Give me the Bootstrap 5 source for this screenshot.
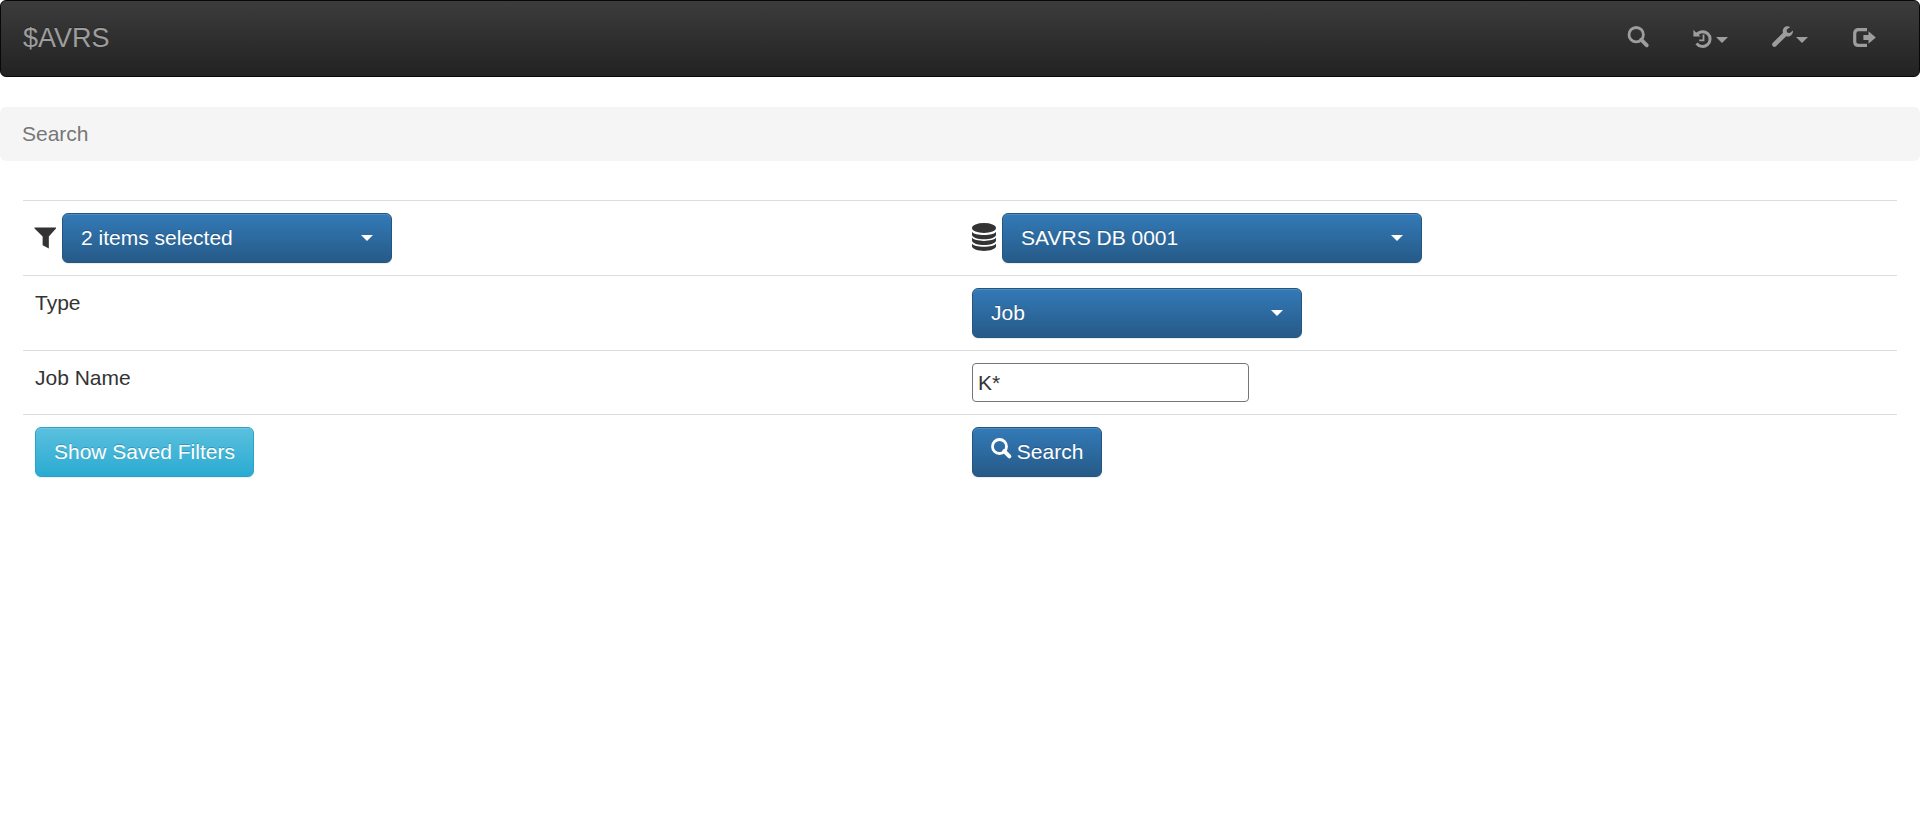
<!DOCTYPE html>
<html lang="en">
<head>
<meta charset="utf-8">
<meta name="viewport" content="width=device-width, initial-scale=1">
<title>$AVRS - Search</title>
<link rel="stylesheet" href="https://cdn.jsdelivr.net/npm/bootstrap@5.3.0/dist/css/bootstrap.min.css">
<style>
  body { font-family: "Liberation Sans", Arial, sans-serif; font-size: 21px; line-height: 30px; color: #333; background: #fff; }
  svg { fill: currentColor; flex: none; overflow: visible; }

  .topbar { --bs-navbar-padding-y: 0; padding: 0; margin-bottom: 30px; border: 1px solid #080808; border-radius: 6px; background: linear-gradient(#3c3c3c, #222); }
  .topbar .navbar-brand { margin: 0; padding: 22px 22px 23px; font-size: 27px; line-height: 30px; color: #9d9d9d; text-shadow: 0 -1px 0 rgba(0,0,0,.25); }
  .topbar .nav { margin-right: 21px; }
  .topbar .nav-link { display: flex; align-items: flex-end; gap: 3px; padding: 25px 22px 29px; color: #9d9d9d; }
  .topbar .nav-link:hover, .topbar .navbar-brand:hover { color: #fff; }
  .topbar .dropdown-toggle::after { display: none; }
  .arrow-down { width: 12px; height: 6px; border: 6px solid transparent; border-top-color: currentColor; border-bottom: 0; }

  .crumbs { padding: 12px 22px; margin-bottom: 39px; border-radius: 6px; background: #f5f5f5; }
  .crumbs .breadcrumb-item.active { color: #777; }

  .search-form { margin: 0 23px; }
  .form-line { border-top: 1px solid #ddd; }
  .form-line > .col-6 { padding: 12px; }
  .with-icon { display: flex; align-items: center; gap: 6px; }

  .glossy { height: 50px; padding: 9px 18px; border: 1px solid #245580; border-radius: 6px; font-size: 21px; line-height: 30px; color: #fff; background: linear-gradient(#337ab7, #265a88); text-shadow: 0 -1px 0 rgba(0,0,0,.2); box-shadow: inset 0 1px 0 rgba(255,255,255,.15), 0 1px 1px rgba(0,0,0,.075); }
  .glossy:hover, .glossy:focus { color: #fff; border-color: #204d74; }
  .glossy-info { border-color: #28a4c9; background: linear-gradient(#5bc0de, #2aabd2); }
  .glossy-info:hover { border-color: #269abc; }
  .picker { width: 330px; }
  .picker-wide { width: 420px; }
  .picker.dropdown-toggle::after { display: none; }
  select.glossy { appearance: none; max-width: 100%; background: url("data:image/svg+xml,%3Csvg xmlns='http://www.w3.org/2000/svg' width='12' height='6'%3E%3Cpath fill='%23fff' d='M0 0h12L6 6z'/%3E%3C/svg%3E") no-repeat right 18px center, linear-gradient(#337ab7, #265a88); }
  select.glossy option { color: #333; background: #fff; }
  .name-box { display: block; width: 277px; max-width: 100%; height: 39px; padding: 1px 5px; border: 1px solid #767676; border-radius: 4px; color: #333; background: #fff; }
</style>
</head>
<body>

<nav class="topbar navbar navbar-expand" aria-label="Main">
  <a class="navbar-brand" href="#">$AVRS</a>
  <ul class="nav ms-auto flex-nowrap">
    <li class="nav-item">
      <a class="nav-link" href="#" aria-label="Search">
        <svg width="21" height="21" viewBox="0 0 21 21" aria-hidden="true"><circle cx="9.2" cy="8.7" r="7.2" fill="none" stroke="currentColor" stroke-width="2.8"/><path d="M14.200 13.700 19.800 19.300" fill="none" stroke="currentColor" stroke-width="3.800" stroke-linecap="round"/></svg>
      </a>
    </li>
    <li class="nav-item dropdown">
      <a class="nav-link dropdown-toggle" href="#" role="button" data-bs-toggle="dropdown" aria-expanded="false" aria-label="History">
        <svg width="21" height="21" viewBox="0 0 21 21" aria-hidden="true"><path d="M4.800 8.500A7.400 7.400 0 1 1 4.600 17.300" fill="none" stroke="currentColor" stroke-width="3"/><path d="M1.400 3.800v6.800h7.200L6.700 8.700V6.200L4 6.500z"/><path d="M11.500 8.500v5.800H7.200" fill="none" stroke="currentColor" stroke-width="1.800"/></svg>
        <span class="arrow-down mb-1"></span>
      </a>
    </li>
    <li class="nav-item dropdown">
      <a class="nav-link dropdown-toggle" href="#" role="button" data-bs-toggle="dropdown" aria-expanded="false" aria-label="Tools">
        <svg width="21" height="21" viewBox="0 0 21 21" aria-hidden="true"><path d="M18.2.9C16-.3 13 .2 11.6 2.2c-1 1.500-1.100 3-.6 4.600L.6 17c-.8 1-.6 2.400.3 3.200.9.900 2.200.900 3.100.100l10.200-10.100c3.300 1 7.100-1.200 6.800-5.800L17.800 7 15 6.400 14.600 3.800z"/></svg>
        <span class="arrow-down mb-1"></span>
      </a>
    </li>
    <li class="nav-item">
      <a class="nav-link" href="#" aria-label="Log out">
        <svg width="24" height="21" viewBox="-1 0 24 21" aria-hidden="true"><path d="M14 3.700H5.500Q1.700 3.700 1.700 7.500v8.200Q1.700 19.400 5.500 19.400H14" fill="none" stroke="currentColor" stroke-width="3.200"/><path d="M10.400 9.100H15.500V5.300L22.800 11.500 15.500 17.700V14H10.400z"/></svg>
      </a>
    </li>
  </ul>
</nav>

<nav class="crumbs" aria-label="Breadcrumb">
  <ol class="breadcrumb m-0">
    <li class="breadcrumb-item active" aria-current="page">Search</li>
  </ol>
</nav>

<form class="search-form" onsubmit="return false">
  <div class="row g-0 form-line">
    <div class="col-6 with-icon">
      <svg width="21" height="22" viewBox="0 0 22 22" aria-hidden="true"><path d="M-.5 0h22.500v1L14.500 9.300V22L8 18.700V9.300L-.5 1z"/></svg>
      <button type="button" class="btn glossy picker dropdown-toggle d-flex align-items-center justify-content-between" aria-haspopup="listbox" aria-expanded="false">2 items selected<span class="arrow-down"></span></button>
    </div>
    <div class="col-6 with-icon">
      <label class="d-flex" for="database"><svg width="24" height="28" viewBox="0 1 24 28" role="img" aria-label="Database"><ellipse cx="12" cy="5" rx="12" ry="5"/><path id="disk" d="M0 8.800C2 13.200 22 13.200 24 8.800V12C23 17.700 1 17.700 0 12z"/><use href="#disk" y="5.800"/><use href="#disk" y="11.600"/></svg></label>
      <select id="database" class="glossy picker-wide"><option>SAVRS DB 0001</option></select>
    </div>
  </div>
  <div class="row g-0 form-line">
    <div class="col-6"><label for="type">Type</label></div>
    <div class="col-6 d-flex">
      <select id="type" class="glossy picker"><option>Job</option></select>
    </div>
  </div>
  <div class="row g-0 form-line">
    <div class="col-6"><label for="job-name">Job Name</label></div>
    <div class="col-6"><input id="job-name" class="name-box" type="text" value="K*"></div>
  </div>
  <div class="row g-0 form-line">
    <div class="col-6"><button type="button" class="btn glossy glossy-info">Show Saved Filters</button></div>
    <div class="col-6">
      <button type="submit" class="btn glossy"><svg class="align-baseline" width="20" height="21" viewBox="0 0 20 21" aria-hidden="true"><circle cx="8.500" cy="8.500" r="7" fill="none" stroke="currentColor" stroke-width="2.800"/><path d="M13.200 13.200 18.400 18.400" fill="none" stroke="currentColor" stroke-width="4" stroke-linecap="round"/></svg> Search</button>
    </div>
  </div>
</form>

<script src="https://cdn.jsdelivr.net/npm/bootstrap@5.3.0/dist/js/bootstrap.bundle.min.js"></script>
</body>
</html>
